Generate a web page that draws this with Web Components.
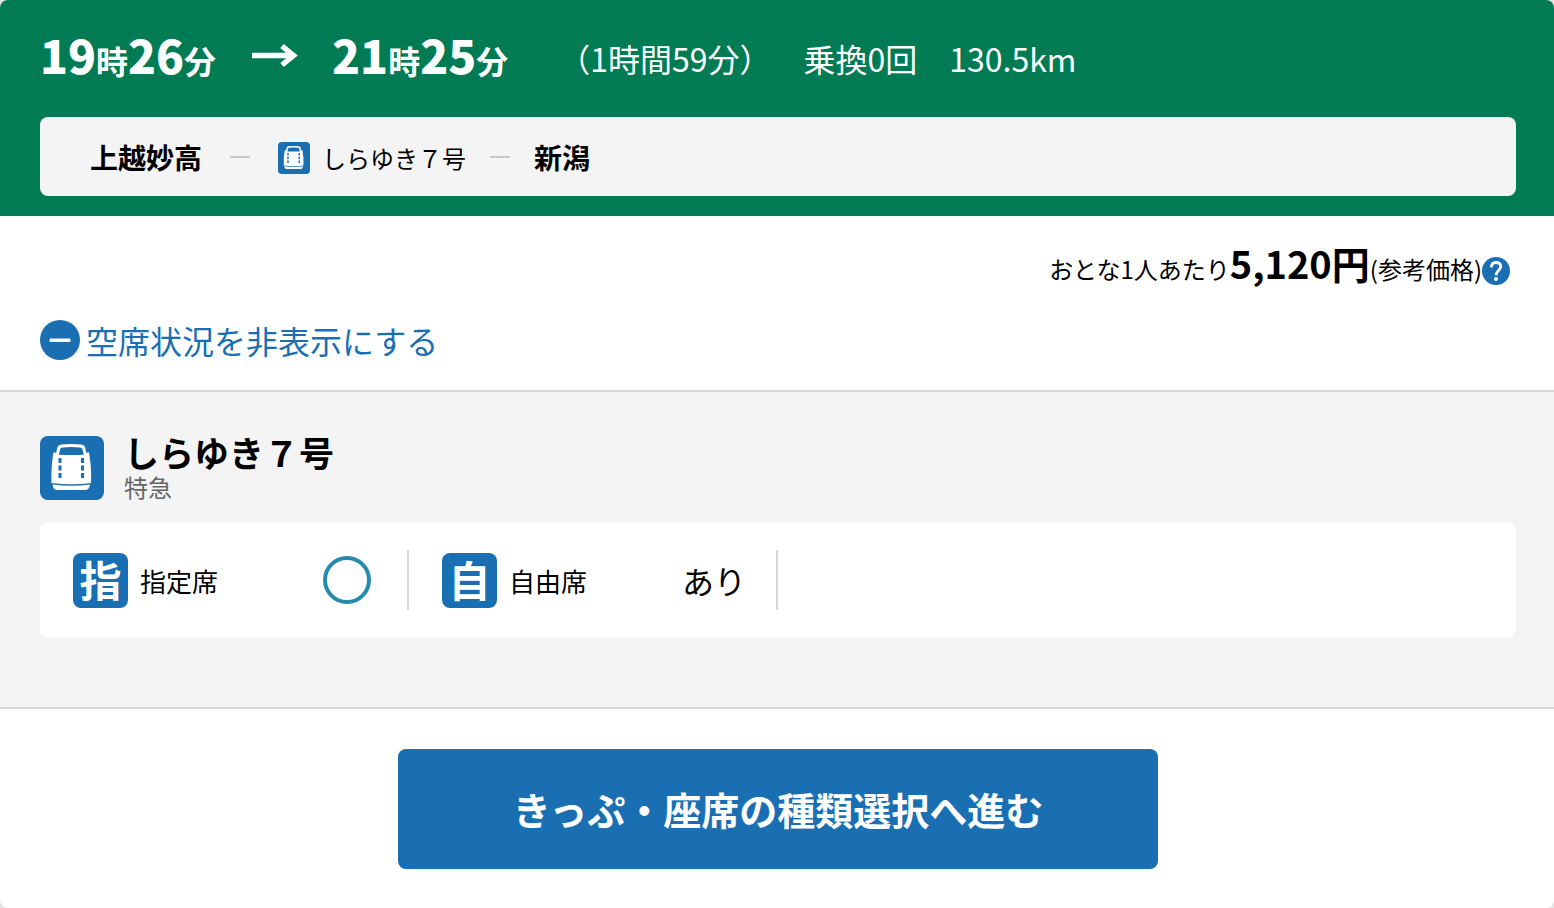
<!DOCTYPE html>
<html lang="ja">
<head>
<meta charset="utf-8">
<meta name="viewport" content="width=device-width, initial-scale=1">
<title>列車の選択</title>
<style>
html { background: #e4e4e4; }
body {
  margin: 0;
  color: #000;
  font-family: "Noto Sans CJK JP", sans-serif;
  font-size: 24px;
  --blue: #1a6fb3;
  --green: #007b53;
  --grey: #f4f4f4;
  --line: #d6d8d8;
}
</style>
</head>
<body>
<route-card>
  <route-header slot="header">
    <route-time slot="depart" hour="19" minute="26"></route-time>
    <route-time slot="arrive" hour="21" minute="25"></route-time>
    <span slot="info">（1時間59分）</span>
    <span slot="info">乗換0回</span>
    <span slot="info">130.5km</span>
    <route-path slot="path" from="上越妙高" to="新潟">しらゆき７号</route-path>
  </route-header>
  <fare-summary label="おとな1人あたり" amount="5,120" note="(参考価格)"></fare-summary>
  <seat-toggle>空席状況を非表示にする</seat-toggle>
  <train-seats name="しらゆき７号" kind="特急">
    <seat-item mark="指" name="指定席"><seat-open></seat-open></seat-item>
    <seat-item mark="自" name="自由席">あり</seat-item>
  </train-seats>
  <proceed-button>きっぷ・座席の種類選択へ進む</proceed-button>
</route-card>

<script>
function define(name, render) {
  customElements.define(name, class extends HTMLElement {
    constructor() {
      super();
      this.attachShadow({ mode: 'open' });
    }
    connectedCallback() {
      this.shadowRoot.innerHTML = render(this);
    }
  });
}

define('train-icon', () => `
<style>
:host { display: block; flex: none; width: 64px; height: 64px; }
svg { display: block; width: 100%; height: 100%; }
</style>
<svg viewBox="0 0 64 64" aria-hidden="true">
  <rect width="64" height="64" rx="8" fill="var(--blue)"/>
  <path d="M13.500 16.500 Q15 15.500 16 17.500 L17.500 11 Q18.200 8.600 21.500 8.400 Q31 7.700 41 8.400 Q44.300 8.600 45 11 L46.500 17.500 Q47.500 15.500 49 16.500 Q51.700 31 51 47 Q31.500 49.500 11.500 47 Q10.800 31 13.500 16.500Z" fill="#fff"/>
  <path d="M18.800 18.800 L20.200 12.900 Q20.600 11.500 22.500 11.400 Q31 10.800 40 11.400 Q41.900 11.500 42.300 12.900 L43.800 18.800 Q31 19.200 18.800 18.800Z" fill="var(--blue)"/>
  <path d="M20 22v20M42.500 22v20" stroke="var(--blue)" stroke-width="3" stroke-dasharray="5 2.500" fill="none"/>
  <path d="M12.500 48.500 Q31.500 51 50 48.500 L49 52 Q48 54 45.500 54 H17.500 Q14.500 54 13.500 52Z" fill="#fff"/>
</svg>`);

define('route-time', el => `
<style>
:host { display: block; font-size: 32px; line-height: 80px; font-weight: 700; white-space: nowrap; }
b { font-size: 46px; line-height: 1; }
</style>
<b>${el.getAttribute('hour')}</b>時<b>${el.getAttribute('minute')}</b>分`);

define('route-path', el => `
<style>
:host { display: flex; align-items: center; gap: 24px; padding: 0 50px; min-height: 79px; box-sizing: border-box; background: var(--grey); border-radius: 8px; color: #000; }
strong { font-size: 28px; line-height: 40px; font-weight: 700; }
i { width: 20px; height: 2px; background: #c8c8c8; flex: none; }
strong + i { margin: 0 4px; }
.train { display: flex; align-items: center; gap: 12px; padding-top: 2px; line-height: 36px; }
train-icon { width: 32px; height: 32px; }
</style>
<strong>${el.getAttribute('from')}</strong><i></i>
<span class="train"><train-icon></train-icon><slot></slot></span><i></i>
<strong>${el.getAttribute('to')}</strong>`);

define('route-header', () => `
<style>
:host { display: block; padding: 20px 38px 20px 40px; background: var(--green); color: #fff; }
.top { display: flex; align-items: flex-start; flex-wrap: wrap; margin-bottom: 17px; }
svg { flex: none; margin: 22px 34px 0 36px; }
.info { display: flex; gap: 32px; margin-left: 50px; font-size: 32px; line-height: 76px; white-space: nowrap; }
</style>
<div class="top">
  <slot name="depart"></slot>
  <svg width="46" height="28" viewBox="0 0 46 28" role="img" aria-label="から">
    <path d="M0 13.500H41M30 4L41.500 13.500L30 23" fill="none" stroke="#fff" stroke-width="5.500"/>
  </svg>
  <slot name="arrive"></slot>
  <div class="info"><slot name="info"></slot></div>
</div>
<slot name="path"></slot>`);

define('fare-summary', el => `
<style>
:host { display: flex; justify-content: flex-end; align-items: baseline; padding: 15px 44px 0 40px; line-height: 64px; }
strong { font-size: 38px; font-weight: 700; }
button { align-self: center; width: 28px; height: 28px; padding: 0; border: 0; border-radius: 50%; background: none; cursor: pointer; margin-top: 10px; }
svg { display: block; }
</style>
<span>${el.getAttribute('label')}</span><strong>${el.getAttribute('amount')}円</strong><span>${el.getAttribute('note')}</span>
<button type="button" aria-label="参考価格について">
  <svg width="28" height="28" viewBox="0 0 28 28" aria-hidden="true">
    <circle cx="14" cy="14" r="14" fill="var(--blue)"/>
    <path d="M9.300 10.300C9.500 7 11.300 5.500 14 5.500c2.900 0 4.700 1.600 4.700 4.100 0 3.800-4.700 4.100-4.700 8.700" fill="none" stroke="#fff" stroke-width="2.800"/>
    <circle cx="14" cy="22" r="2" fill="#fff"/>
  </svg>
</button>`);

define('seat-toggle', () => `
<style>
:host { display: block; padding: 15px 38px 26px 40px; }
button { display: flex; align-items: center; gap: 6px; padding: 0; border: 0; background: none; color: var(--blue); font: inherit; font-size: 32px; line-height: 48px; cursor: pointer; }
svg { flex: none; }
</style>
<button type="button" aria-expanded="true">
  <svg width="40" height="40" viewBox="0 0 40 40" aria-hidden="true">
    <circle cx="20" cy="20" r="20" fill="var(--blue)"/>
    <rect x="9.500" y="18.500" width="21" height="3.500" rx="1" fill="#fff"/>
  </svg>
  <slot></slot>
</button>`);

define('seat-open', () => `
<style>:host { display: block; margin-right: 6px; } svg { display: block; }</style>
<svg width="48" height="48" viewBox="0 0 48 48" role="img" aria-label="空席あり">
  <circle cx="24" cy="24" r="22" fill="none" stroke="#258bac" stroke-width="4"/>
</svg>`);

define('seat-item', el => `
<style>
:host { display: flex; align-items: center; flex: 0 0 25%; box-sizing: border-box; height: 60px; padding: 0 30px 0 33px; border-right: 2px solid var(--line); font-size: 26px; }
.mark { width: 55px; height: 55px; border-radius: 8px; background: var(--blue); color: #fff; font-size: 42px; line-height: 52px; font-weight: 700; text-align: center; }
.name { margin-left: 12px; }
.state { margin-left: auto; font-size: 32px; line-height: 48px; }
</style>
<span class="mark" aria-hidden="true">${el.getAttribute('mark')}</span>
<span class="name">${el.getAttribute('name')}</span>
<span class="state"><slot></slot></span>`);

define('train-seats', el => `
<style>
:host { display: block; padding: 44px 38px 70px 40px; background: var(--grey); border: solid var(--line); border-width: 2px 0; }
.head { display: flex; align-items: center; gap: 20px; margin-bottom: 23px; height: 64px; }
h2 { margin: 0; font-size: 35px; line-height: 38px; font-weight: 700; }
p { margin: 0; line-height: 32px; color: #666; }
.seats { display: flex; align-items: center; min-height: 114px; background: #fff; border-radius: 8px; }
</style>
<div class="head"><train-icon></train-icon><div><h2>${el.getAttribute('name')}</h2><p>${el.getAttribute('kind')}</p></div></div>
<div class="seats"><slot></slot></div>`);

define('proceed-button', () => `
<style>
:host { display: flex; justify-content: center; padding: 40px 38px 39px 40px; }
button { width: 760px; max-width: 100%; min-height: 120px; padding: 0; border: 0; border-radius: 8px; background: var(--blue); color: #fff; font: inherit; font-size: 38px; line-height: 56px; font-weight: 700; cursor: pointer; }
</style>
<button type="button"><slot></slot></button>`);

define('route-card', () => `
<style>
:host { display: block; background: #fff; border-radius: 8px; overflow: hidden; }
</style>
<slot name="header"></slot><slot></slot>`);
</script>
</body>
</html>
